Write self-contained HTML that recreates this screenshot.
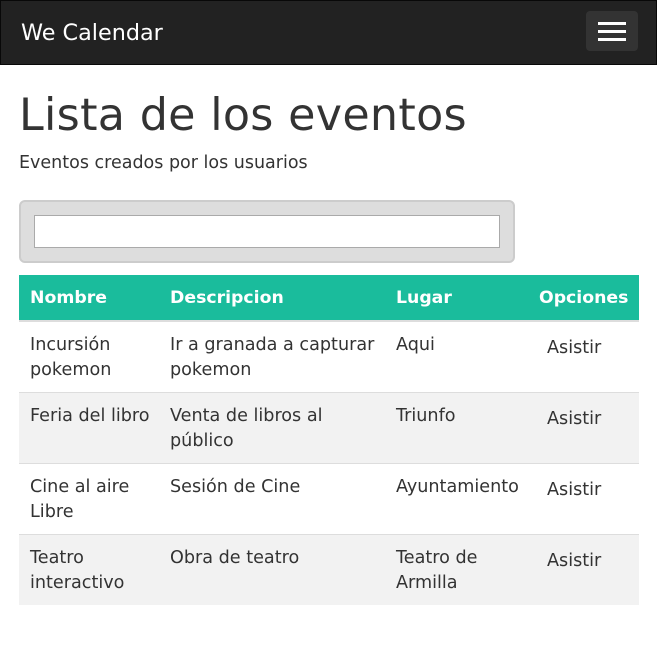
<!DOCTYPE html>
<html><head><meta charset="utf-8"><style>
*{margin:0;padding:0;box-sizing:border-box}
body{width:657px;height:645px;background:#fff;font-family:"DejaVu Sans","Liberation Sans",sans-serif;color:#333;position:relative;overflow:hidden}
.nav{position:absolute;left:0;top:0;width:657px;height:65px;background:#222;border:1px solid #080808}
.brand{position:absolute;left:20px;top:19px;color:#fff;font-size:22.3px}
.tog{position:absolute;left:585px;top:10px;width:52px;height:40px;background:#333;border-radius:4px}
.tog i{position:absolute;left:12px;width:28px;height:3px;background:#fff}
h1{position:absolute;left:19px;top:90px;font-weight:normal;font-size:44.4px;white-space:nowrap;letter-spacing:0.3px}
.sub{position:absolute;left:19px;top:153px;font-size:17.5px}
.search{position:absolute;left:19px;top:200px;width:496px;height:63px;background:#ddd;border:2px solid #ccc;border-radius:6px}
.search div{position:absolute;left:13px;top:13px;width:466px;height:33px;background:#fff;border:1px solid #aaa}
.th{position:absolute;left:19px;top:275px;width:620px;height:45px;background:#1abc9c}
.hd{position:absolute;top:288px;color:#fff;font-weight:bold;font-size:17.3px}
.line{position:absolute;left:19px;width:620px}
.c{position:absolute;font-size:17.6px;line-height:25px;white-space:nowrap}
</style></head><body>
<div class="nav"><div class="brand">We Calendar</div><div class="tog"><i style="top:11px"></i><i style="top:19px"></i><i style="top:27px"></i></div></div>
<h1>Lista de los eventos</h1>
<div class="sub">Eventos creados por los usuarios</div>
<div class="search"><div></div></div>
<div class="th"></div>
<div class="hd" style="left:30px">Nombre</div>
<div class="hd" style="left:170px">Descripcion</div>
<div class="hd" style="left:396px">Lugar</div>
<div class="hd" style="left:539px">Opciones</div>
<div class="line" style="top:320px;height:2px;background:#ddd"></div>
<div class="line" style="top:392px;height:1px;background:#ddd"></div>
<div class="line" style="top:393px;height:70px;background:#f2f2f2"></div>
<div class="line" style="top:463px;height:1px;background:#ddd"></div>
<div class="line" style="top:534px;height:1px;background:#ddd"></div>
<div class="line" style="top:535px;height:70px;background:#f2f2f2"></div>

<div class="c" style="left:30px;top:333px">Incursión<br>pokemon</div>
<div class="c" style="left:170px;top:333px">Ir a granada a capturar<br>pokemon</div>
<div class="c" style="left:396px;top:333px">Aqui</div>
<div class="c" style="left:547px;top:336px">Asistir</div>

<div class="c" style="left:30px;top:404px">Feria del libro</div>
<div class="c" style="left:170px;top:404px">Venta de libros al<br>público</div>
<div class="c" style="left:396px;top:404px">Triunfo</div>
<div class="c" style="left:547px;top:407px">Asistir</div>

<div class="c" style="left:30px;top:475px">Cine al aire<br>Libre</div>
<div class="c" style="left:170px;top:475px">Sesión de Cine</div>
<div class="c" style="left:396px;top:475px">Ayuntamiento</div>
<div class="c" style="left:547px;top:478px">Asistir</div>

<div class="c" style="left:30px;top:546px">Teatro<br>interactivo</div>
<div class="c" style="left:170px;top:546px">Obra de teatro</div>
<div class="c" style="left:396px;top:546px">Teatro de<br>Armilla</div>
<div class="c" style="left:547px;top:549px">Asistir</div>
</body></html>
